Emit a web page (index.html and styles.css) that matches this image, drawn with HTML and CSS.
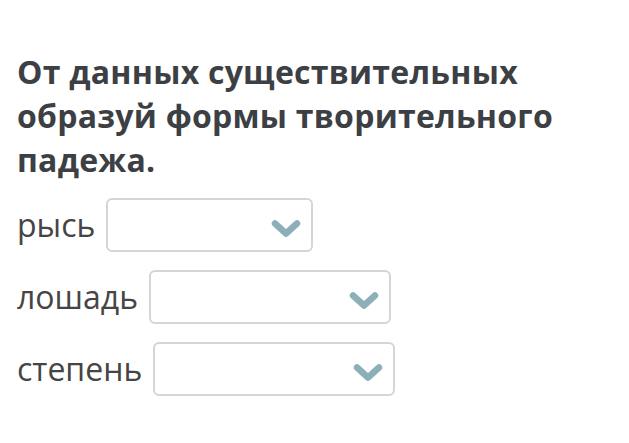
FILE: index.html
```html
<!DOCTYPE html>
<html lang="ru">
<head>
<meta charset="utf-8">
<link rel="stylesheet" href="styles.css">
</head>
<body>
<div class="page">
  <h1 class="title">От данных существительных образуй формы творительного падежа.</h1>
  <div class="rows">
    <div class="row">
      <span class="label">рысь</span>
      <div class="select w1"><svg class="chev" viewBox="0 0 30 19"><path d="M4 4.5 L15 14.5 L26 4.5" fill="none" stroke="#8db0b8" stroke-width="6.5" stroke-linecap="round" stroke-linejoin="round"/></svg></div>
    </div>
    <div class="row">
      <span class="label">лошадь</span>
      <div class="select w2"><svg class="chev" viewBox="0 0 30 19"><path d="M4 4.5 L15 14.5 L26 4.5" fill="none" stroke="#8db0b8" stroke-width="6.5" stroke-linecap="round" stroke-linejoin="round"/></svg></div>
    </div>
    <div class="row">
      <span class="label">степень</span>
      <div class="select w2"><svg class="chev" viewBox="0 0 30 19"><path d="M4 4.5 L15 14.5 L26 4.5" fill="none" stroke="#8db0b8" stroke-width="6.5" stroke-linecap="round" stroke-linejoin="round"/></svg></div>
    </div>
  </div>
</div>
</body>
</html>
```

FILE: styles.css
```css
html, body {
  margin: 0;
  background: #ffffff;
}
.page {
  padding: 50px 17px 0 17px;
  font-family: "Open Sans", sans-serif;
}
.title {
  margin: 0;
  font-size: 32px;
  font-weight: 700;
  line-height: 44px;
  letter-spacing: 0.25px;
  color: #3c3f44;
  width: 600px;
}
.rows {
  display: flex;
  flex-direction: column;
  gap: 18px;
  margin-top: 16px;
}
.row {
  display: flex;
  align-items: center;
  gap: 11px;
}
.label {
  font-size: 32px;
  color: #454545;
  line-height: 40px;
}
.select {
  height: 54px;
  border: 2px solid #d2d6d6;
  border-radius: 6px;
  display: flex;
  align-items: center;
  justify-content: flex-end;
  padding-right: 10px;
  padding-top: 6px;
  box-sizing: border-box;
}
.w1 { width: 207px; }
.w2 { width: 242px; }
.chev {
  width: 30px;
  height: 19px;
}
```
